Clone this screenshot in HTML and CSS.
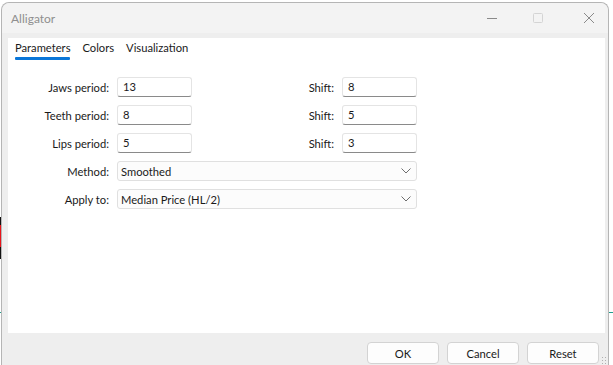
FILE: index.html
```html
<!DOCTYPE html>
<html lang="en">
<head>
    <meta charset="UTF-8">
    <title>Alligator</title>
    <link rel="stylesheet" href="styles.css">
</head>
<body>
    <div class="chart-red"></div>
    <div class="chart-line left"></div>
    <div class="chart-line right"></div>

    <div class="window">
        <div class="titlebar">
            <span class="title">Alligator</span>
            <div class="controls">
                <span class="ctl">
                    <svg width="12" height="12" viewBox="0 0 12 12"><path d="M1 6.5h10" stroke="#8a8a8a" stroke-width="1"/></svg>
                </span>
                <span class="ctl">
                    <svg width="12" height="12" viewBox="0 0 12 12"><rect x="1.5" y="1.5" width="9" height="9" rx="1" fill="none" stroke="#d4d4d4" stroke-width="1"/></svg>
                </span>
                <span class="ctl">
                    <svg width="12" height="12" viewBox="0 0 12 12"><path d="M1 1l10 10M11 1L1 11" stroke="#8a8a8a" stroke-width="1"/></svg>
                </span>
            </div>
        </div>

        <div class="panel">
            <div class="tabs">
                <span class="tab active">Parameters</span>
                <span class="tab">Colors</span>
                <span class="tab">Visualization</span>
            </div>

            <div class="form">
                <label>Jaws period:</label>
                <div class="field">13</div>
                <label>Shift:</label>
                <div class="field">8</div>

                <label>Teeth period:</label>
                <div class="field">8</div>
                <label>Shift:</label>
                <div class="field">5</div>

                <label>Lips period:</label>
                <div class="field">5</div>
                <label>Shift:</label>
                <div class="field">3</div>

                <label>Method:</label>
                <div class="select">
                    <span>Smoothed</span>
                    <svg width="10" height="6" viewBox="0 0 10 6"><path d="M0.5 0.5l4.5 4.5 4.5-4.5" fill="none" stroke="#6e6e6e" stroke-width="1"/></svg>
                </div>

                <label>Apply to:</label>
                <div class="select">
                    <span>Median Price (HL/2)</span>
                    <svg width="10" height="6" viewBox="0 0 10 6"><path d="M0.5 0.5l4.5 4.5 4.5-4.5" fill="none" stroke="#6e6e6e" stroke-width="1"/></svg>
                </div>
            </div>
        </div>

        <div class="footer">
            <button class="btn">OK</button>
            <button class="btn">Cancel</button>
            <button class="btn">Reset</button>
        </div>
        <div class="grip"></div>
    </div>
</body>
</html>
```

FILE: styles.css
```css
body {
    margin: 0;
    padding-top: 2px;
    width: 613px;
    height: 365px;
    overflow: hidden;
    position: relative;
    background: #ffffff;
    font-family: Lato, "Noto Sans", sans-serif;
    font-size: 11.2px;
    color: #1a1a1a;
    box-sizing: border-box;
}

/* bits of the chart behind the dialog */
.chart-red {
    position: absolute;
    left: 0;
    top: 217px;
    width: 1px;
    height: 42px;
    background: #111;
}
.chart-red::after {
    content: "";
    position: absolute;
    left: 0;
    top: 8px;
    width: 1px;
    height: 22px;
    background: #e8141b;
}
.chart-line {
    position: absolute;
    top: 312px;
    height: 1px;
    background: #1f9e8e;
}
.chart-line.left {
    left: 0;
    width: 1px;
}
.chart-line.right {
    left: 609px;
    width: 4px;
}

.window {
    margin-left: 1px;
    width: 606px;
    height: 380px;
    border: 1px solid #b5b5b5;
    border-bottom: none;
    border-radius: 8px 8px 0 0;
    background: #eeeeee;
    position: relative;
}

.titlebar {
    height: 30px;
    display: flex;
    align-items: center;
    justify-content: space-between;
    background: #f3f3f3;
    border-radius: 8px 8px 0 0;
}
.title {
    padding-left: 9px;
    color: #8f8f8f;
    font-size: 12px;
}
.controls {
    display: flex;
    padding-right: 13px;
}
.ctl {
    width: 46px;
    height: 30px;
    display: flex;
    align-items: center;
    justify-content: center;
}
.ctl:last-child {
    width: 34px;
    justify-content: flex-end;
}

.panel {
    margin: 5px 3px 0 6px;
    height: 295px;
    background: #ffffff;
}

.tabs {
    display: flex;
    gap: 12px;
    padding: 2px 0 0 7px;
}
.tab {
    line-height: 16px;
    padding-bottom: 4px;
    position: relative;
    color: #1a1a1a;
}
.tab.active::after {
    content: "";
    position: absolute;
    left: 0;
    right: 0;
    bottom: 0;
    height: 3px;
    border-radius: 1px;
    background: #0a76d8;
}

.form {
    display: grid;
    grid-template-columns: 101px 75px 134px 75px;
    grid-auto-rows: 20px;
    column-gap: 8px;
    row-gap: 8px;
    margin-top: 17px;
    align-items: center;
}
.form label {
    text-align: right;
    color: #1a1a1a;
}
.field {
    height: 20px;
    box-sizing: border-box;
    border: 1px solid #e4e4e4;
    border-bottom-color: #8a8a8a;
    border-radius: 3px;
    padding-left: 5px;
    line-height: 18px;
    background: #ffffff;
}
.select {
    grid-column: 2 / 5;
    height: 20px;
    box-sizing: border-box;
    border: 1px solid #e0e0e0;
    border-radius: 3px;
    background: #fcfcfc;
    padding: 0 5px 0 3px;
    display: flex;
    align-items: center;
    justify-content: space-between;
}

.footer {
    display: flex;
    justify-content: flex-end;
    gap: 8px;
    padding: 9px 9px 0 0;
}
.btn {
    width: 72px;
    height: 22px;
    box-sizing: border-box;
    border: 1px solid #d3d3d3;
    border-radius: 4px;
    background: #fdfdfd;
    font-family: Lato, "Noto Sans", sans-serif;
    font-size: 11.2px;
    color: #1a1a1a;
    padding: 0;
}

.grip {
    position: absolute;
    right: 1px;
    top: 353px;
    width: 6px;
    height: 8px;
    background-image: radial-gradient(circle, #b0b0b0 0.8px, transparent 1px);
    background-size: 3px 3px;
}
```
